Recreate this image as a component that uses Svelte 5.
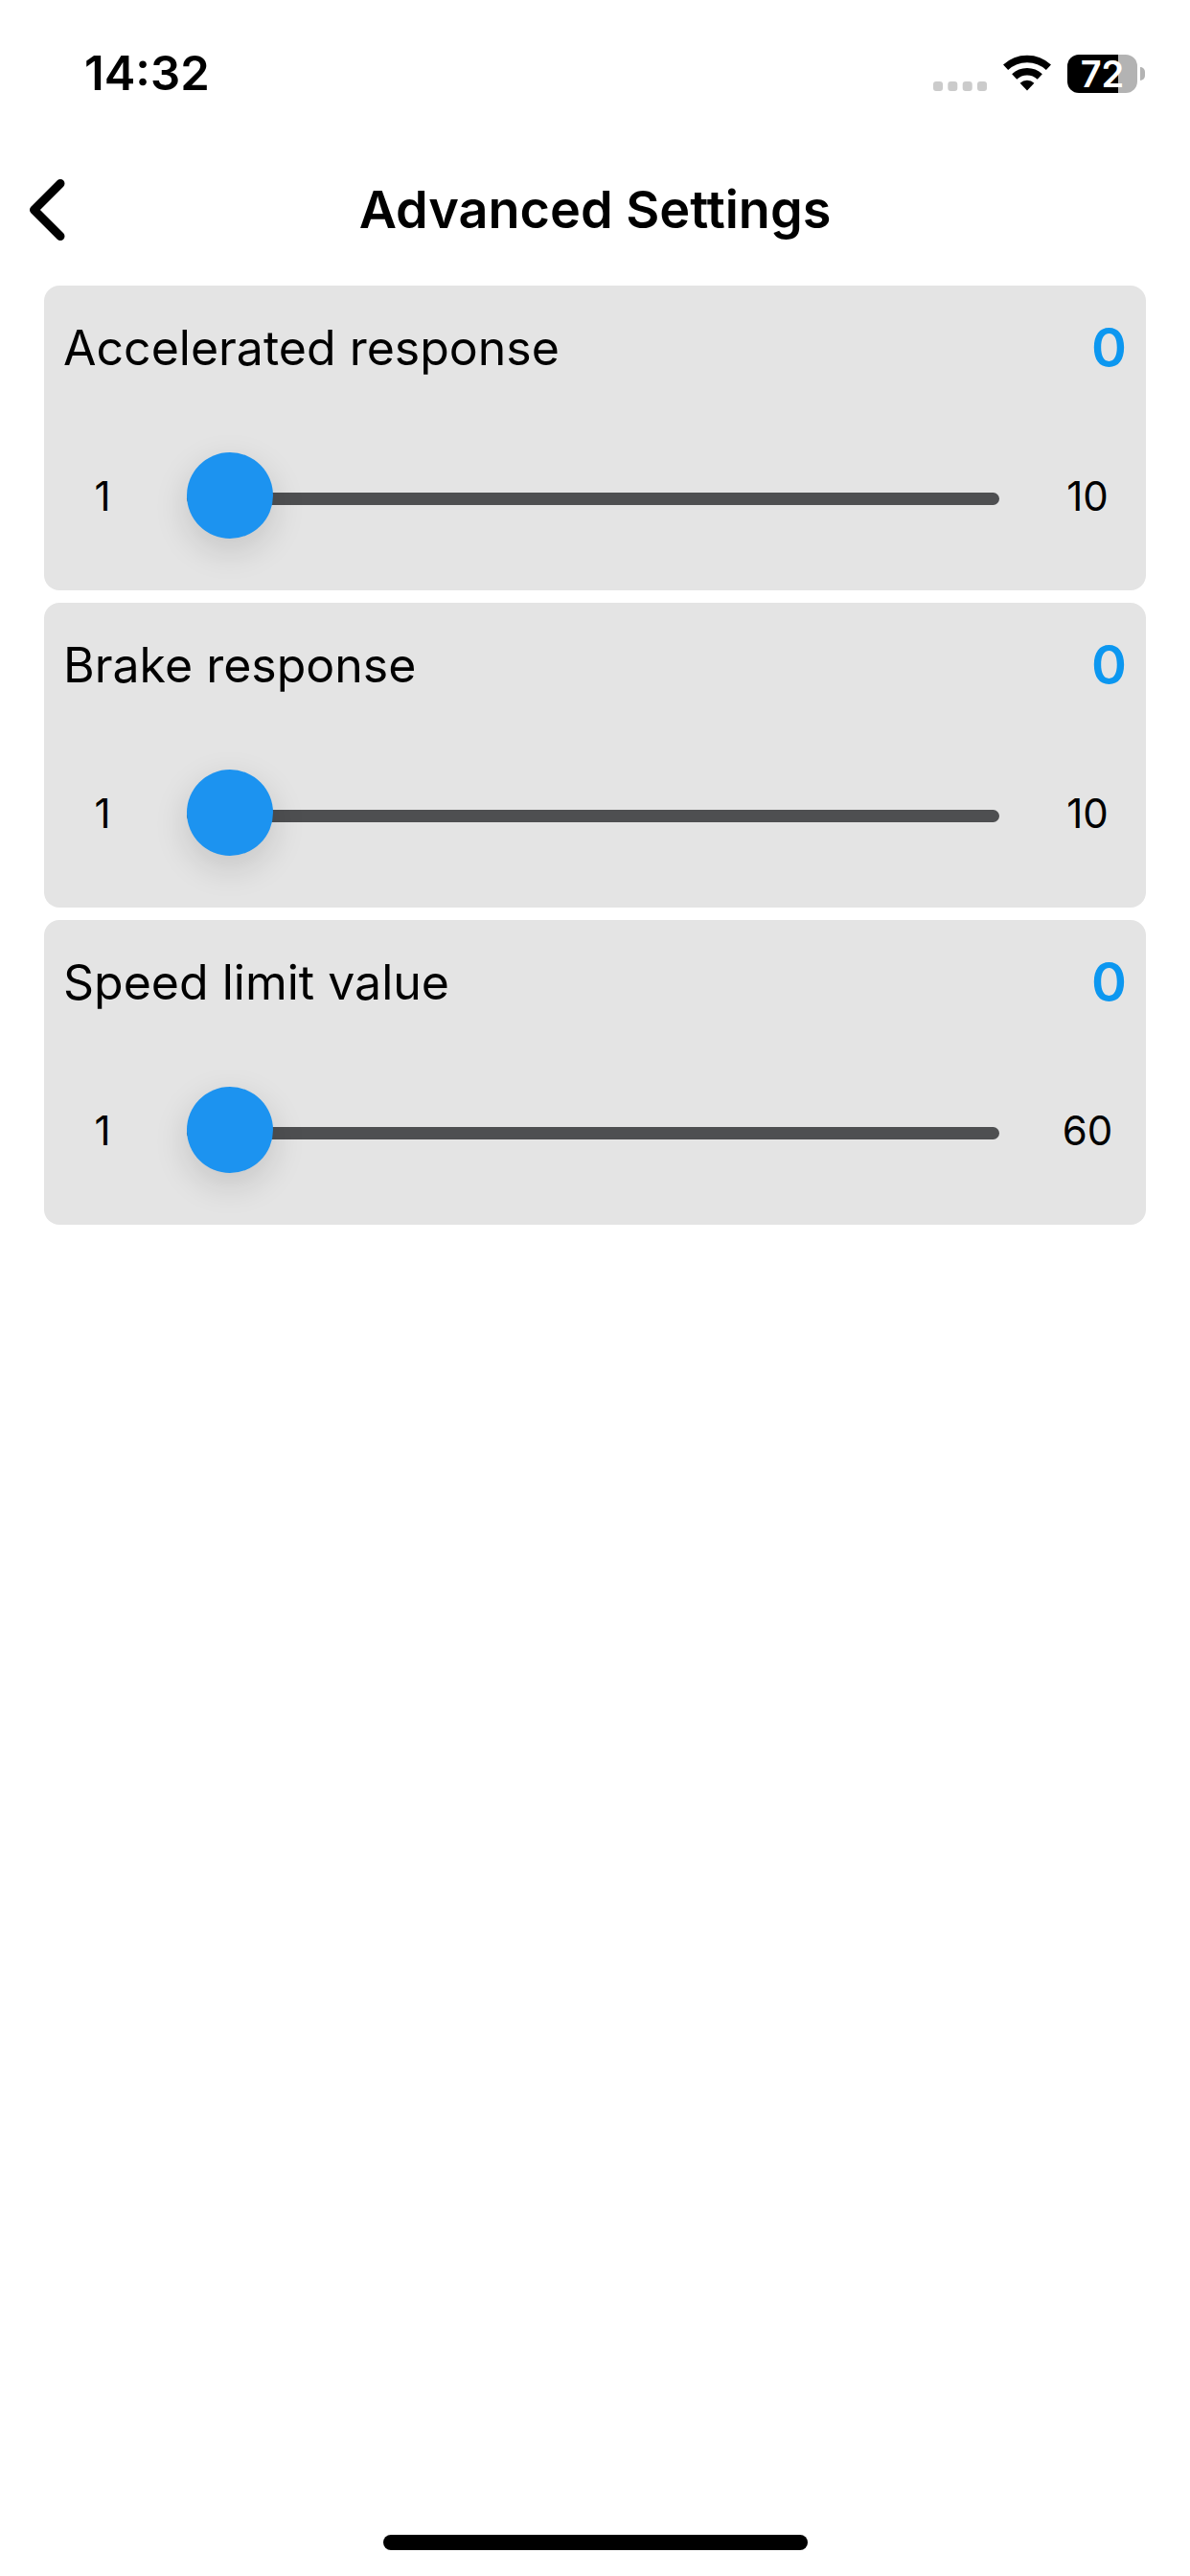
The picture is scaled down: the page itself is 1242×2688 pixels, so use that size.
<script>
	let settings = $state([
		{ id: 'accelerated', label: 'Accelerated response', value: 0, min: 1, max: 10 },
		{ id: 'brake', label: 'Brake response', value: 0, min: 1, max: 10 },
		{ id: 'speed-limit', label: 'Speed limit value', value: 0, min: 1, max: 60 }
	]);

	const time = '14:32';
	const battery = 72;
</script>

<div class="screen">
	<div class="status">
		<span class="time">{time}</span>
		<div class="indicators">
			<svg width="56" height="40" viewBox="0 0 56 40" fill="#cbcbcb" aria-hidden="true">
				<rect x="0" y="28" width="10" height="10" rx="3" />
				<rect x="15.3" y="28" width="10" height="10" rx="3" />
				<rect x="30.7" y="28" width="10" height="10" rx="3" />
				<rect x="46" y="28" width="10" height="10" rx="3" />
			</svg>
			<svg width="50" height="40" viewBox="0 0 50 40" fill="none" aria-hidden="true">
				<path d="M2.6 13.3A32.8 32.8 0 0 1 47.4 13.3" stroke="#000" stroke-width="7.5" />
				<path d="M11.7 23A19.5 19.5 0 0 1 38.3 23" stroke="#000" stroke-width="7.5" />
				<path d="M25 37.5L17.6 29.8A10.8 10.8 0 0 1 32.4 29.8Z" fill="#000" />
			</svg>
			<div class="battery">
				<div class="battery-body" style="--level: {battery}%">{battery}</div>
				<div class="battery-tip"></div>
			</div>
		</div>
	</div>

	<header>
		<button class="back" aria-label="Back">
			<svg width="38" height="64" viewBox="0 0 38 64" fill="none">
				<path
					d="M33 4.5L5.5 32L33 59.5"
					stroke="#000"
					stroke-width="9"
					stroke-linecap="round"
					stroke-linejoin="round"
				/>
			</svg>
		</button>
		<h1>Advanced Settings</h1>
	</header>

	<main>
		{#each settings as setting (setting.id)}
			<section class="card">
				<div class="card-head">
					<label for={setting.id}>{setting.label}</label>
					<output for={setting.id}>{setting.value}</output>
				</div>
				<div class="range">
					<span>{setting.min}</span>
					<input
						id={setting.id}
						type="range"
						min={setting.min}
						max={setting.max}
						value={setting.value}
						oninput={(e) => (setting.value = Number(e.currentTarget.value))}
					/>
					<span>{setting.max}</span>
				</div>
			</section>
		{/each}
	</main>

	<div class="home-bar"></div>
</div>

<style>
	:global(body) {
		background: #fff;
	}
	.screen {
		box-sizing: border-box;
		min-height: 100vh;
		display: flex;
		flex-direction: column;
		padding-bottom: 27px;
		font-family: Inter, 'Liberation Sans', sans-serif;
		color: #000;
	}

	.status {
		box-sizing: border-box;
		height: 139px;
		padding: 14px 47px 0 88px;
		display: flex;
		align-items: center;
		justify-content: space-between;
	}
	.time {
		font-size: 49px;
		font-weight: 600;
	}
	.indicators {
		display: flex;
		align-items: center;
		gap: 17px;
	}
	.battery {
		display: flex;
		align-items: center;
		gap: 3px;
	}
	.battery-body {
		width: 73px;
		height: 40px;
		border-radius: 12px;
		background: linear-gradient(to right, #000 var(--level), #b3b3b3 var(--level));
		color: #fff;
		font-size: 38px;
		font-weight: 600;
		line-height: 40px;
		text-align: center;
	}
	.battery-tip {
		width: 5px;
		height: 14px;
		border-radius: 0 7px 7px 0;
		background: #b3b3b3;
	}

	header {
		height: 159px;
		padding: 0 30px;
		display: grid;
		grid-template-columns: 1fr auto 1fr;
		align-items: center;
	}
	.back {
		justify-self: start;
		display: flex;
		padding: 0;
		border: 0;
		background: none;
		cursor: pointer;
	}
	h1 {
		margin: 0;
		font-size: 54px;
		font-weight: 600;
	}

	main {
		display: flex;
		flex-direction: column;
		gap: 13px;
		padding: 0 46px;
	}
	.card {
		padding-bottom: 10px;
		border-radius: 16px;
		background: #e4e4e4;
	}
	.card-head {
		height: 130px;
		padding: 0 20px;
		display: flex;
		align-items: center;
		justify-content: space-between;
	}
	label {
		font-size: 50px;
	}
	output {
		font-size: 56px;
		font-weight: 600;
		color: #0c97f0;
	}

	.range {
		height: 178px;
		display: grid;
		grid-template-columns: 122px 1fr 122px;
		align-items: center;
		font-size: 42px;
		text-align: center;
	}
	input[type='range'] {
		-webkit-appearance: none;
		appearance: none;
		min-width: 0;
		height: 13px;
		margin: 7px 31px 0 27px;
		background: none;
		cursor: pointer;
	}
	input[type='range']::-webkit-slider-runnable-track {
		height: 13px;
		border-radius: 7px;
		background: #4e4f51;
	}
	input[type='range']::-webkit-slider-thumb {
		-webkit-appearance: none;
		width: 90px;
		height: 90px;
		margin-top: -42px;
		border-radius: 50%;
		background: #1c93f0;
		box-shadow: 0 12px 36px rgba(0, 0, 0, 0.14);
	}

	.home-bar {
		width: 443px;
		height: 16px;
		margin: auto auto 0;
		border-radius: 8px;
		background: #000;
	}
</style>
